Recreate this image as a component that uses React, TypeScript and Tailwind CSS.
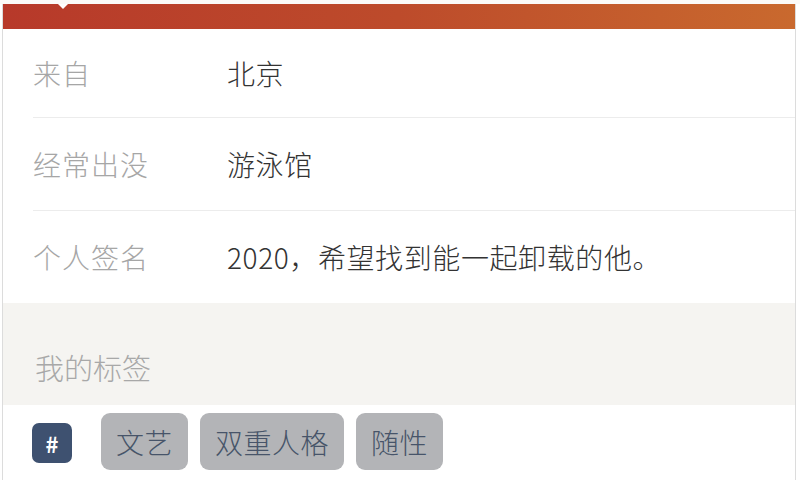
const font = { fontFamily: '"Noto Sans CJK SC", "Noto Sans", sans-serif' };

const rows = [
  { label: '来自', value: '北京', h: 'h-[89px]' },
  { label: '经常出没', value: '游泳馆', h: 'h-[93px]' },
  { label: '个人签名', value: '2020，希望找到能一起卸载的他。', h: 'h-[92px]' },
];

const tags = ['文艺', '双重人格', '随性'];

export default function App() {
  return (
    <div className="w-[800px] h-[494px] bg-white overflow-hidden font-light" style={font}>
      <div className="h-[4px] bg-[#fbfaf8]" />
      <div className="ml-[2px] w-[794px] h-[476px] border-x border-[#dcdcdc] flex flex-col">
        {/* header bar */}
        <div className="relative h-[25px] bg-gradient-to-r from-[#b7392a] via-[#bd4b2b] to-[#c9692e]">
          <div className="absolute left-[55px] top-0 w-0 h-0 border-x-[5px] border-x-transparent border-t-[5px] border-t-white" />
        </div>

        {/* info rows */}
        <div className="pl-[30px]">
          {rows.map((r, i) => (
            <div
              key={r.label}
              className={`${r.h} flex items-center ${i < rows.length - 1 ? 'border-b border-[#ececec]' : ''}`}
            >
              <div className="w-[194px] text-[28px] text-[#a6a6a6] tracking-[1px]">{r.label}</div>
              <div className="text-[28px] text-[#333333] tracking-[0.6px]">{r.value}</div>
            </div>
          ))}
        </div>

        {/* section title */}
        <div className="h-[102px] bg-[#f5f4f1] pl-[32px] flex items-end pb-[16px]">
          <span className="text-[29px] text-[#a8a8a8]">我的标签</span>
        </div>

        {/* tags */}
        <div className="flex-1 pl-[29px] pt-[8px] flex items-start gap-[12px]">
          <div className="mt-[10px] w-[40px] h-[40px] rounded-[7px] bg-[#3e5170] flex items-center justify-center text-white text-[22px] font-bold mr-[17px]">
            #
          </div>
          {tags.map((t) => (
            <div
              key={t}
              className="h-[57px] px-[15px] rounded-[9px] bg-[#b3b4b7] flex items-center text-[28px] text-[#475469] tracking-[0.5px]"
            >
              {t}
            </div>
          ))}
        </div>
      </div>
    </div>
  );
}
